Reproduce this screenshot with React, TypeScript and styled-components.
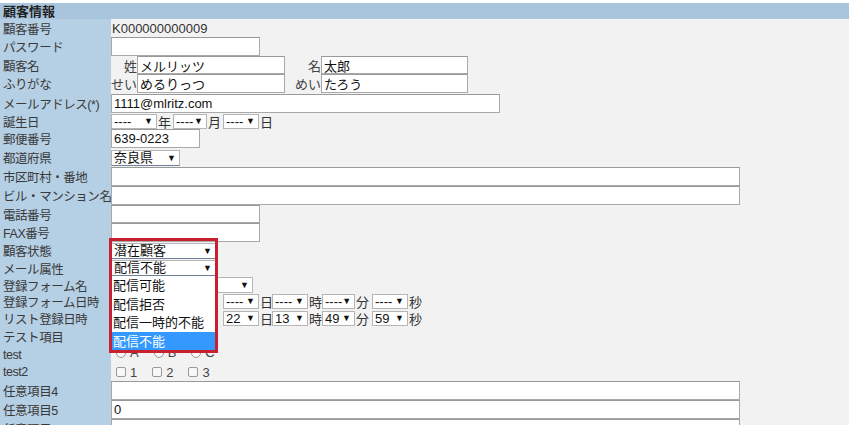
import React from 'react'
import styled, { createGlobalStyle } from 'styled-components'

const GlobalStyle = createGlobalStyle`
  body {
    margin: 0;
    background: #ffffff;
    font-family: "Liberation Sans", "Noto Sans CJK JP", sans-serif;
    font-size: 13px;
    color: #333333;
  }
`

const Page = styled.div`
  position: relative;
  width: 849px;
  padding-top: 3px;
`
const FormTable = styled.div`
  display: grid;
  grid-template-columns: 111px 1fr;
`
const Header = styled.div`
  grid-column: 1 / span 2;
  height: 16px;
  line-height: 16px;
  padding-left: 3px;
  background: #a9c5dd;
  font-weight: bold;
  color: #222;
  font-family: "Noto Sans CJK JP", sans-serif;
`
const LabelCell = styled.div<{ h: number }>`
  height: ${({ h }) => h}px;
  background: #b5cfe4;
  display: flex;
  align-items: center;
  padding-left: 3px;
  white-space: nowrap;
  overflow: hidden;
  color: #3a3a3a;
  font-size: 12.5px;
  letter-spacing: -0.45px;
  font-family: "Liberation Sans", "Noto Sans CJK JP", sans-serif;
`
const ValueCell = styled.div<{ h: number }>`
  height: ${({ h }) => h}px;
  background: #f2f2f2;
  display: flex;
  align-items: center;
  white-space: nowrap;
  color: #222;
`
const PlainText = styled.span`
  padding-left: 1px;
  color: #333;
`
const TextBox = styled.div<{ w: number; h?: number }>`
  box-sizing: border-box;
  width: ${({ w }) => w}px;
  height: ${({ h }) => h ?? 19}px;
  background: #ffffff;
  border: 1px solid #a9a9a9;
  border-top-color: #999;
  display: flex;
  align-items: center;
  padding-left: 2px;
  color: #111;
  font-family: "Liberation Sans", "Noto Sans CJK JP", sans-serif;
`
const SubLabel = styled.span<{ w: number }>`
  width: ${({ w }) => w}px;
  text-align: right;
  color: #444;
  font-family: "Noto Sans CJK JP", sans-serif;
`
const SelectBox = styled.div<{ w: number; h: number; underline?: boolean; covered?: boolean }>`
  box-sizing: border-box;
  flex: none;
  width: ${({ w }) => w}px;
  height: ${({ h }) => h}px;
  line-height: ${({ h }) => h - 2}px;
  background: #ffffff;
  border: 1px solid #b5b5b5;
  border-bottom-color: ${({ underline }) => (underline ? '#6f7f99' : '#b5b5b5')};
  display: flex;
  align-items: center;
  justify-content: space-between;
  padding: 0 3px 0 2px;
  color: #111;
  visibility: ${({ covered }) => (covered ? 'hidden' : 'visible')};
  font-family: "Liberation Sans", "Noto Sans CJK JP", sans-serif;
`
const Arrow = styled.span`
  font-size: 9px;
  color: #111;
`
const Unit = styled.span<{ w: number; covered?: boolean }>`
  box-sizing: border-box;
  flex: none;
  width: ${({ w }) => w}px;
  padding-left: 1px;
  line-height: 15px;
  color: #333;
  visibility: ${({ covered }) => (covered ? 'hidden' : 'visible')};
  font-family: "Noto Sans CJK JP", sans-serif;
`
const Choice = styled.label`
  display: inline-flex;
  align-items: center;
  margin-left: 5px;
  margin-right: 10px;
  color: #444;
  font-size: 13px;
`
const CheckMark = styled.span<{ round?: boolean }>`
  box-sizing: border-box;
  width: 10px;
  height: 10px;
  margin-right: 4px;
  border: 1px solid #9a9a9a;
  border-radius: ${({ round }) => (round ? '50%' : '2px')};
  background: #f8f8f8;
`
const RadioRow = styled.div`
  display: flex;
  align-items: center;
  margin-top: -4px;
`
const Popup = styled.div`
  position: absolute;
  left: 111px;
  top: 276px;
  width: 105px;
  background: #ffffff;
  font-family: "Noto Sans CJK JP", sans-serif;
`
const PopupItem = styled.div<{ selected?: boolean }>`
  height: 18.5px;
  line-height: 18.5px;
  padding-left: 2px;
  background: ${({ selected }) => (selected ? '#3399ff' : '#ffffff')};
  color: ${({ selected }) => (selected ? '#ffffff' : '#111')};
`
const Highlight = styled.div`
  position: absolute;
  left: 109px;
  top: 238px;
  width: 109px;
  height: 115px;
  box-sizing: border-box;
  border: 3px solid #c8202f;
  pointer-events: none;
`

function Select({
  value,
  w,
  h = 16,
  underline,
  covered,
}: {
  value: string
  w: number
  h?: number
  underline?: boolean
  covered?: boolean
}) {
  return (
    <SelectBox w={w} h={h} underline={underline} covered={covered}>
      <span>{value}</span>
      <Arrow>▼</Arrow>
    </SelectBox>
  )
}

const DT_WIDTHS = [46, 34, 36, 36, 33, 36]
const DT_UNITS = ['年', '月', '日', '時', '分', '秒']
const DT_UNIT_WIDTHS = [16, 16, 13, 14, 17, 14]

// parts hidden behind the open dropdown are laid out but not shown
function DateTime({ parts, coveredCount = 0 }: { parts: string[]; coveredCount?: number }) {
  return (
    <>
      {parts.map((p, i) => (
        <React.Fragment key={i}>
          <Select value={p} w={DT_WIDTHS[i]} h={15} covered={i < coveredCount} />
          <Unit w={DT_UNIT_WIDTHS[i]} covered={i < coveredCount}>
            {DT_UNITS[i]}
          </Unit>
        </React.Fragment>
      ))}
    </>
  )
}

type Row = { label: string; h: number; content?: React.ReactNode }

const rows: Row[] = [
  { label: '顧客番号', h: 18, content: <PlainText>K000000000009</PlainText> },
  { label: 'パスワード', h: 19, content: <TextBox w={149} /> },
  {
    label: '顧客名',
    h: 18,
    content: (
      <>
        <SubLabel w={26}>姓</SubLabel>
        <TextBox w={148} h={18}>メルリッツ</TextBox>
        <SubLabel w={36}>名</SubLabel>
        <TextBox w={147} h={18}>太郎</TextBox>
      </>
    ),
  },
  {
    label: 'ふりがな',
    h: 19,
    content: (
      <>
        <SubLabel w={26}>せい</SubLabel>
        <TextBox w={148} h={19}>めるりっつ</TextBox>
        <SubLabel w={36}>めい</SubLabel>
        <TextBox w={147} h={19}>たろう</TextBox>
      </>
    ),
  },
  { label: 'メールアドレス(*)', h: 20, content: <TextBox w={389}>1111@mlritz.com</TextBox> },
  { label: '誕生日', h: 16, content: <DateTime parts={['----', '----', '----']} /> },
  { label: '郵便番号', h: 19, content: <TextBox w={89} h={19}>639-0223</TextBox> },
  { label: '都道府県', h: 19, content: <Select value="奈良県" w={69} underline /> },
  { label: '市区町村・番地', h: 19, content: <TextBox w={629} /> },
  { label: 'ビル・マンション名', h: 19, content: <TextBox w={629} /> },
  { label: '電話番号', h: 18, content: <TextBox w={149} h={18} /> },
  { label: 'FAX番号', h: 19, content: <TextBox w={149} /> },
  { label: '顧客状態', h: 17, content: <Select value="潜在顧客" w={105} underline /> },
  { label: 'メール属性', h: 18, content: <Select value="配信不能" w={105} underline /> },
  { label: '登録フォーム名', h: 16, content: <Select value="" w={142} /> },
  {
    label: '登録フォーム日時',
    h: 17,
    content: <DateTime parts={['----', '----', '----', '----', '----', '----']} coveredCount={2} />,
  },
  {
    label: 'リスト登録日時',
    h: 17,
    content: <DateTime parts={['2019', '11', '22', '13', '49', '59']} coveredCount={2} />,
  },
  { label: 'テスト項目', h: 19 },
  {
    label: 'test',
    h: 17,
    content: (
      <RadioRow>
        <Choice><CheckMark round />A</Choice>
        <Choice><CheckMark round />B</Choice>
        <Choice><CheckMark round />C</Choice>
      </RadioRow>
    ),
  },
  {
    label: 'test2',
    h: 18,
    content: (
      <>
        <Choice><CheckMark />1</Choice>
        <Choice><CheckMark />2</Choice>
        <Choice><CheckMark />3</Choice>
      </>
    ),
  },
  { label: '任意項目4', h: 19, content: <TextBox w={629} /> },
  { label: '任意項目5', h: 19, content: <TextBox w={629}>0</TextBox> },
  { label: '任意項目6', h: 19, content: <TextBox w={629} /> },
]

export default function App() {
  return (
    <>
      <GlobalStyle />
      <Page>
        <FormTable>
          <Header>顧客情報</Header>
          {rows.map((r) => (
            <React.Fragment key={r.label}>
              <LabelCell h={r.h}>{r.label}</LabelCell>
              <ValueCell h={r.h}>{r.content}</ValueCell>
            </React.Fragment>
          ))}
        </FormTable>
        <Popup>
          <PopupItem>配信可能</PopupItem>
          <PopupItem>配信拒否</PopupItem>
          <PopupItem>配信一時的不能</PopupItem>
          <PopupItem selected>配信不能</PopupItem>
        </Popup>
        <Highlight />
      </Page>
    </>
  )
}
